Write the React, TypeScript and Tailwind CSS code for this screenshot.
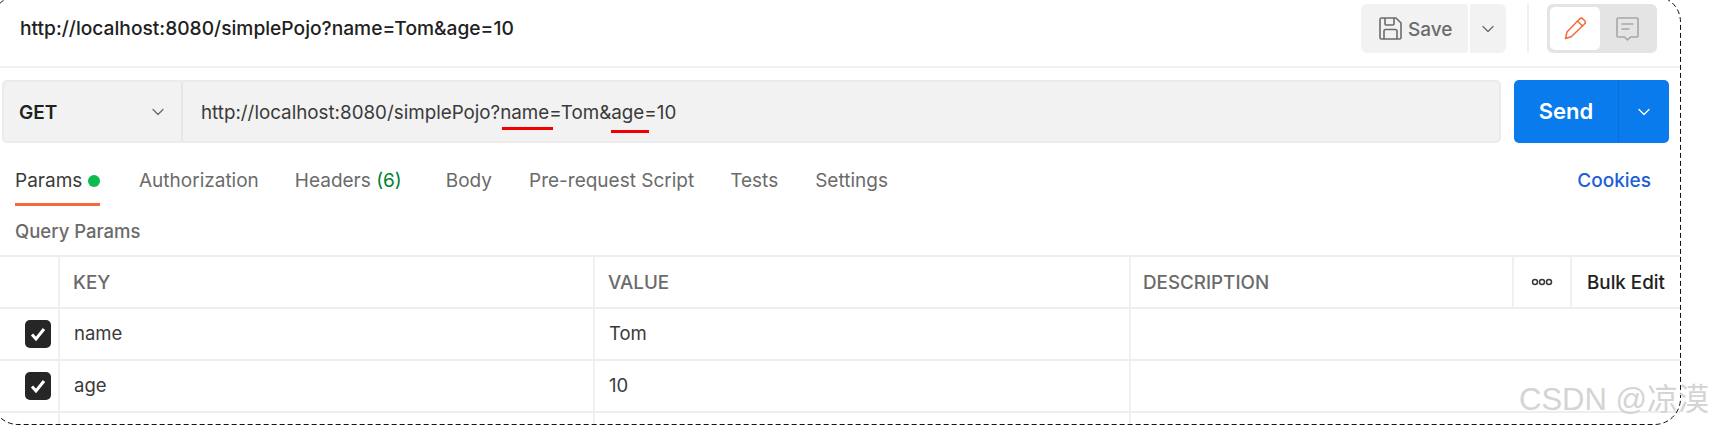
import { ChevronDown } from "lucide-react";

const rows = [
  { key: "name", value: "Tom" },
  { key: "age", value: "10" },
];

const gridCols = "grid grid-cols-[60px_535px_536px_383px_58px_108px] h-[52px] border-b-2 border-[#eeeeee]";
const cell = "flex items-center border-r-2 border-[#f0f0f0]";

function SaveIcon() {
  return (
    <svg width="23" height="23" viewBox="0 0 23 23" fill="none" stroke="#6b6b6b" strokeWidth="1.6" strokeLinejoin="round">
      <path d="M2.5 1h14.500l5 5v14.500a1.500 1.500 0 0 1-1.500 1.500h-18a1.500 1.500 0 0 1-1.500-1.500v-18a1.500 1.500 0 0 1 1.500-1.500z" />
      <path d="M6 1v6a1 1 0 0 0 1 1h7a1 1 0 0 0 1-1v-6" />
      <path d="M5 22v-8a1.500 1.500 0 0 1 1.500-1.500h10a1.500 1.500 0 0 1 1.500 1.500v8" />
    </svg>
  );
}

function PencilIcon() {
  return (
    <svg width="23" height="23" viewBox="0 0 23 23" fill="none" stroke="#f26b3a" strokeWidth="1.5" strokeLinejoin="round">
      <path d="M1.500 21.500l1.500-6.500 12.500-13a2.500 2.500 0 0 1 3.500 0l1.500 1.500a2.500 2.500 0 0 1 0 3.500l-13 12.500z" />
      <path d="M13.500 4l5.500 5.500" />
    </svg>
  );
}

function CommentIcon() {
  return (
    <svg width="23" height="24" viewBox="0 0 23 24" fill="none" stroke="#a6a6a6" strokeWidth="1.6" strokeLinejoin="round">
      <path d="M2 1h19a1 1 0 0 1 1 1v17a1 1 0 0 1-1 1h-6.500l-3 3-3-3h-6.500a1 1 0 0 1-1-1v-17a1 1 0 0 1 1-1z" />
      <path d="M5.500 7h12M5.500 12h8" />
    </svg>
  );
}

function CheckBox() {
  return (
    <div className="w-[26px] h-[28px] rounded-[5px] bg-[#262626] flex items-center justify-center">
      <svg width="18" height="18" viewBox="0 0 18 18" fill="none" stroke="#ffffff" strokeWidth="3">
        <path d="M3 9.500l4 4.500 8-10" />
      </svg>
    </div>
  );
}

export default function App() {
  return (
    <div className="relative w-[1713px] h-[431px] overflow-hidden bg-white font-['Inter',sans-serif]">
      <div className="w-[1680px] h-[424px] overflow-hidden">
        {/* Title row */}
        <div className="h-[68px] border-b-2 border-[#f0f0f0] pt-1 pl-5 pr-[23px] flex items-start justify-between">
          <span className="text-[19.2px] leading-[49px] font-medium text-[#212121]">
            http://localhost:8080/simplePojo?name=Tom&amp;age=10
          </span>
          <div className="flex items-start">
            <button className="w-[107px] h-[49px] rounded-l-[6px] rounded-r-[3px] bg-[#f2f2f2] flex items-center pl-[18px] gap-[6px]">
              <SaveIcon />
              <span className="text-[19px] leading-[24px] pt-[2px] font-medium text-[#6b6b6b]">Save</span>
            </button>
            <button className="ml-[2px] w-[36px] h-[49px] rounded-r-[6px] bg-[#f2f2f2] flex items-center justify-center">
              <ChevronDown className="w-[20px] h-[20px] text-[#6b6b6b]" strokeWidth={1.5} />
            </button>
            <div className="ml-[21px] w-[2px] h-[49px] bg-[#f0f0f0]" />
            <div className="ml-[18px] w-[110px] h-[49px] rounded-[6px] bg-[#e4e4e4] p-[3px] flex items-center">
              <div className="w-[50px] h-[43px] rounded-[5px] bg-white flex items-center justify-center">
                <PencilIcon />
              </div>
              <div className="flex-1 flex items-center justify-center">
                <CommentIcon />
              </div>
            </div>
          </div>
        </div>

        {/* Request bar */}
        <div className="mt-3 pl-[2px] flex">
          <div className="w-[1499px] h-[63px] rounded-[5px] bg-[#f2f2f2] border-2 border-[#ebebeb] flex items-center">
            <div className="w-[179px] h-full border-r-2 border-[#e6e6e6] flex items-center justify-between pl-[15px] pr-[13px]">
              <span className="text-[19px] leading-[24px] pt-[3px] font-semibold text-[#212121]">GET</span>
              <ChevronDown className="w-[20px] h-[20px] text-[#6b6b6b]" strokeWidth={1.5} />
            </div>
            <div className="pl-[18px] pt-[3px] text-[18.800px] leading-[24px] text-[#3a3a3a] relative">
              http://localhost:8080/simplePojo?name=Tom&amp;age=10
              <div className="absolute left-[319px] top-[29px] w-[51px] h-[3px] bg-[#f00000]" />
              <div className="absolute left-[428px] top-[32px] w-[38px] h-[3px] bg-[#f00000]" />
            </div>
          </div>
          <div className="ml-[13px] w-[155px] h-[63px] rounded-[5px] bg-[#097bed] flex text-white">
            <div className="w-[105px] border-r border-[#0a6fd4] flex items-center justify-center">
              <span className="text-[22px] font-semibold">Send</span>
            </div>
            <div className="flex-1 flex items-center justify-center">
              <ChevronDown className="w-[20px] h-[20px]" strokeWidth={1.5} />
            </div>
          </div>
        </div>

        {/* Tabs */}
        <div className="pt-[26px] pl-[15px] pr-[29px] flex items-start text-[19px] leading-[24px] text-[#6b6b6b]">
          <div className="w-[85px] pb-[10px] border-b-[3px] border-[#f26b3a] flex items-center justify-between">
            <span className="text-[#3a3a3a]">Params</span>
            <span className="w-3 h-3 rounded-full bg-[#0cbb52]" />
          </div>
          <span className="ml-[39px]">Authorization</span>
          <span className="ml-[36px]">
            Headers <span className="text-[#007f31]">(6)</span>
          </span>
          <span className="ml-[44px]">Body</span>
          <span className="ml-[37px]">Pre-request Script</span>
          <span className="ml-[36px]">Tests</span>
          <span className="ml-[37px]">Settings</span>
          <span className="ml-auto font-medium text-[#1d5fd6]">Cookies</span>
        </div>

        <div className="mt-[13px] pl-[15px] text-[18.500px] leading-[24px] font-medium text-[#6b6b6b]">Query Params</div>

        {/* Params table */}
        <div className="mt-[12px] border-t-2 border-[#eeeeee]">
          <div className={gridCols}>
            <div className={cell} />
            <div className={`${cell} pl-[13px] pt-[2px] text-[18.800px] font-medium text-[#6b6b6b]`}>KEY</div>
            <div className={`${cell} pl-[13px] pt-[2px] text-[18.800px] font-medium text-[#6b6b6b]`}>VALUE</div>
            <div className={`${cell} pl-[12px] pt-[2px] text-[18.800px] font-medium text-[#6b6b6b]`}>DESCRIPTION</div>
            <div className={`${cell} justify-center`}>
              <svg width="22" height="8" viewBox="0 0 22 8" fill="none" stroke="#3a3a3a" strokeWidth="1.5">
                <circle cx="4" cy="4" r="2.500" />
                <circle cx="11" cy="4" r="2.500" />
                <circle cx="18" cy="4" r="2.500" />
              </svg>
            </div>
            <div className="flex items-center pl-[15px] pt-[2px] text-[18.800px] font-medium text-[#212121] whitespace-nowrap">Bulk Edit</div>
          </div>
          {rows.map((row) => (
            <div key={row.key} className={gridCols}>
              <div className={`${cell} pl-[25px]`}>
                <CheckBox />
              </div>
              <div className={`${cell} pl-[14px] text-[18.500px] text-[#3a3a3a]`}>{row.key}</div>
              <div className={`${cell} pl-[14px] text-[18.500px] text-[#3a3a3a]`}>{row.value}</div>
              <div />
              <div />
              <div />
            </div>
          ))}
          <div className="grid grid-cols-[60px_535px_536px_383px_58px_108px] h-[12px]">
            <div className={cell} />
            <div className={cell} />
            <div className={cell} />
            <div />
            <div />
            <div />
          </div>
        </div>
      </div>

      {/* Dashed selection frame */}
      <svg className="absolute left-0 top-0 pointer-events-none" width="1713" height="431" fill="none">
        <rect x="-8" y="-4" width="1688.500" height="428.500" rx="26" stroke="#111111" strokeWidth="1" strokeDasharray="5 3" />
      </svg>

      {/* Watermark */}
      <div className="absolute left-[1519px] top-[381px] text-[31px] leading-[38px] whitespace-nowrap text-[#d4d4d4] font-['Liberation_Sans','Noto_Sans_CJK_SC',sans-serif]">
        CSDN @凉漠
      </div>
    </div>
  );
}
